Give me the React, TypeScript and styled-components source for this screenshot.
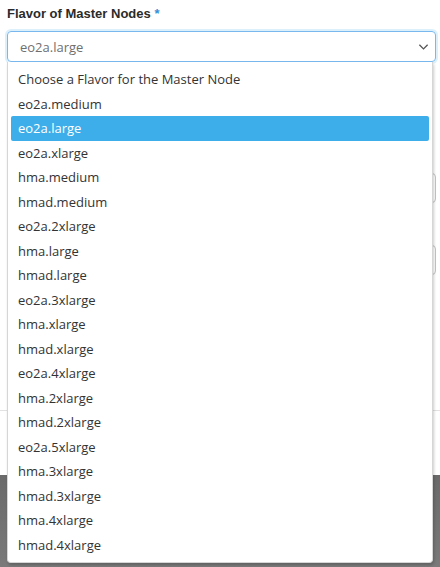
import styled, { createGlobalStyle } from "styled-components";

const flavors = [
  "eo2a.medium",
  "eo2a.large",
  "eo2a.xlarge",
  "hma.medium",
  "hmad.medium",
  "eo2a.2xlarge",
  "hma.large",
  "hmad.large",
  "eo2a.3xlarge",
  "hma.xlarge",
  "hmad.xlarge",
  "eo2a.4xlarge",
  "hma.2xlarge",
  "hmad.2xlarge",
  "eo2a.5xlarge",
  "hma.3xlarge",
  "hmad.3xlarge",
  "hma.4xlarge",
  "hmad.4xlarge",
];

const selected = "eo2a.large";

function App() {
  return (
    <Page>
      <GlobalStyle />
      <Form>
        <Label>
          Flavor of Master Nodes <Required>*</Required>
        </Label>
        <SelectWrap>
          <SelectBox>
            <SelectValue>{selected}</SelectValue>
            <Chevron viewBox="0 0 12 8">
              <path d="M1.5 1.5 L6 6 L10.5 1.5" fill="none" stroke="#555" strokeWidth="1.4" />
            </Chevron>
          </SelectBox>

          {/* open native list */}
          <Dropdown>
            <Option>Choose a Flavor for the Master Node</Option>
            {flavors.map((f) => (
              <Option key={f} $active={f === selected}>
                {f}
              </Option>
            ))}
          </Dropdown>
        </SelectWrap>

        {/* fields hidden behind the open list */}
        <Input $top={111} />
        <Input $top={42} />
      </Form>
      <Divider />
      <Footer />
    </Page>
  );
}

export default App;

const GlobalStyle = createGlobalStyle`
  html, body {
    margin: 0;
    padding: 0;
    background: #fff;
  }
  body {
    font-family: "Open Sans", "Noto Sans", sans-serif;
  }
`;

const Page = styled.div`
  min-height: 567px;
  display: flex;
  flex-direction: column;
  overflow: hidden;
`;

const Form = styled.div`
  padding: 6px 4px 0 7px;
  height: 403px;
  box-sizing: border-box;
`;

const Label = styled.div`
  font-family: "Liberation Sans", Arial, sans-serif;
  font-weight: bold;
  font-size: 13px;
  line-height: 16px;
  color: #2b2b2b;
  margin-bottom: 9px;
`;

const Required = styled.span`
  color: #2f8fd8;
`;

const SelectWrap = styled.div`
  position: relative;
  z-index: 5;
`;

const SelectBox = styled.div`
  height: 31px;
  box-sizing: border-box;
  border: 1px solid #79b8ee;
  border-radius: 4px;
  box-shadow: 0 0 0 2px rgba(61, 174, 233, 0.18);
  display: flex;
  align-items: center;
  justify-content: space-between;
  padding: 0 6px 0 12px;
`;

const SelectValue = styled.span`
  font-size: 13px;
  color: #6f6f6f;
`;

const Chevron = styled.svg`
  width: 11px;
  height: 8px;
`;

const Dropdown = styled.div`
  position: absolute;
  top: 31px;
  left: 0;
  width: 426px;
  box-sizing: border-box;
  padding: 5px 3px 5px 3px;
  background: #fff;
  border: 1px solid #d6d6d6;
  border-top: none;
  border-radius: 0 0 4px 4px;
  box-shadow: 1px 2px 3px rgba(0, 0, 0, 0.2);
`;

const Option = styled.div<{ $active?: boolean }>`
  height: 24.5px;
  line-height: 24.5px;
  padding-left: 7px;
  font-size: 13px;
  color: ${(p) => (p.$active ? "#fff" : "#333")};
  background: ${(p) => (p.$active ? "#3daee9" : "transparent")};
  border-radius: ${(p) => (p.$active ? "2px" : "0")};
  white-space: nowrap;
`;

const Input = styled.div<{ $top: number }>`
  margin-top: ${(p) => p.$top}px;
  height: 30px;
  box-sizing: border-box;
  border: 1px solid #c4c4c4;
  border-radius: 4px;
`;

const Divider = styled.div`
  height: 64px;
  border-top: 1px solid #e2e2e2;
  margin-top: 7px;
`;

const Footer = styled.div`
  flex: 1;
  background: linear-gradient(#6a6a6a, #7a7a7a);
`;
